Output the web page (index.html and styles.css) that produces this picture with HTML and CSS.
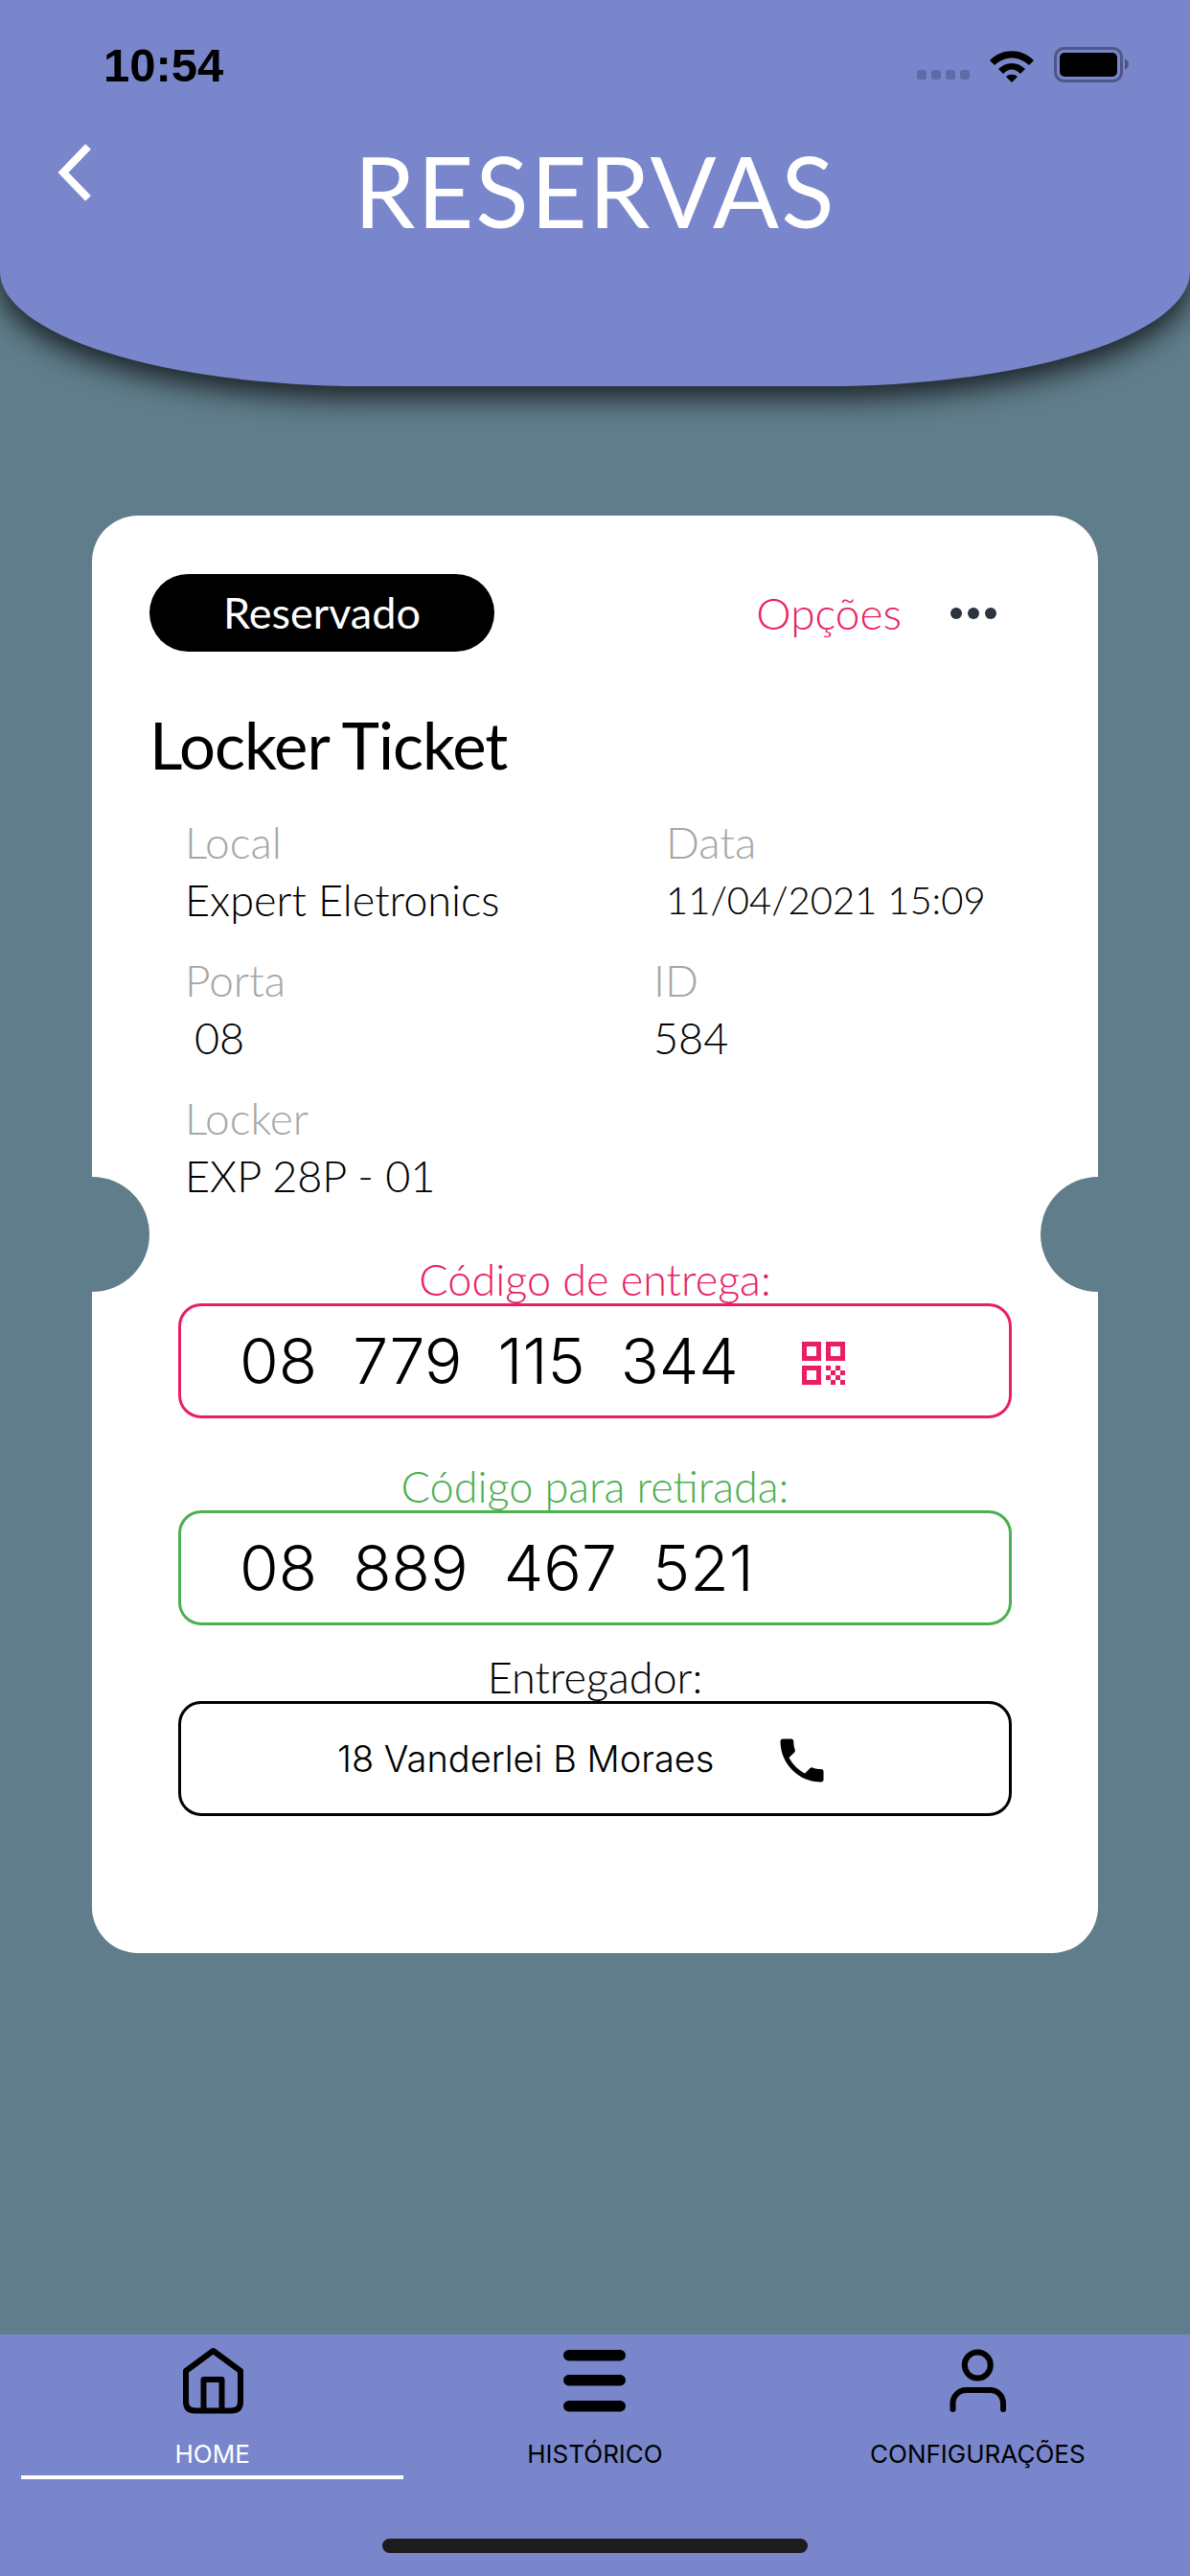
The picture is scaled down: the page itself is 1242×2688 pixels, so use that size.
FILE: index.html
```html
<!DOCTYPE html>
<html lang="pt-BR">
<head>
  <meta charset="UTF-8">
  <meta name="viewport" content="width=device-width, initial-scale=1.0">
  <title>Reservas</title>
  <link rel="stylesheet" href="styles.css">
</head>
<body>
  <div class="screen">
    <header class="header">
      <div class="status-bar">
        <span class="clock">10:54</span>
        <div class="status-icons">
          <div class="signal"><i></i><i></i><i></i><i></i></div>
          <svg class="wifi" width="48" height="36" viewBox="0 0 48 36">
            <path d="M1 13C14 0 34 0 47 13L42 18C31 8 17 8 6 18Z"/>
            <path d="M10 22C18 14 30 14 38 22L33 27C27 21 21 21 15 27Z"/>
            <path d="M18 30C21 27 27 27 30 30L24 36Z"/>
          </svg>
          <svg class="battery" width="80" height="38" viewBox="0 0 80 38">
            <rect x="1.5" y="1.5" width="69" height="34" rx="9" fill="none" stroke="#4f5688" stroke-width="3"/>
            <rect x="6" y="6" width="60" height="25" rx="5"/>
            <path d="M74 12C77 14 78 16 78 18C78 20 77 22 74 24Z" fill="#4f5688"/>
          </svg>
        </div>
      </div>
      <div class="title-row">
        <svg class="back" width="60" height="80" viewBox="0 0 60 80">
          <path d="M42 13L16 40L42 67" fill="none" stroke="#fff" stroke-width="8"/>
        </svg>
        <h1>RESERVAS</h1>
      </div>
    </header>

    <main class="content">
      <div class="card">
        <div class="notch notch-left"></div>
        <div class="notch notch-right"></div>

        <div class="card-top">
          <div class="pill">Reservado</div>
          <div class="options">
            <span class="options-label">Opções</span>
            <svg width="50" height="14" viewBox="0 0 50 14" fill="#2b3440">
              <circle cx="7" cy="7" r="6"/><circle cx="25" cy="7" r="6"/><circle cx="43" cy="7" r="6"/>
            </svg>
          </div>
        </div>

        <h2>Locker Ticket</h2>

        <div class="info-row">
          <div class="info"><div class="info-label">Local</div><div class="info-value">Expert Eletronics</div></div>
          <div class="info"><div class="info-label">Data</div><div class="info-value info-date">11/04/2021 15:09</div></div>
        </div>
        <div class="info-row">
          <div class="info"><div class="info-label">Porta</div><div class="info-value info-porta">08</div></div>
          <div class="info info-id"><div class="info-label">ID</div><div class="info-value">584</div></div>
        </div>
        <div class="info-row">
          <div class="info"><div class="info-label">Locker</div><div class="info-value">EXP 28P - 01</div></div>
        </div>

        <div class="code-group code-pink">
          <div class="code-title">Código de entrega:</div>
          <div class="code-box">
            <span class="code">08&nbsp; 779&nbsp; 115&nbsp; 344</span>
            <svg class="qr" width="46" height="46" viewBox="0 0 46 46" fill="#e91e63">
              <path fill-rule="evenodd" d="M0 0H20V20H0ZM5 5V15H15V5Z"/>
              <path fill-rule="evenodd" d="M25 0H45V20H25ZM30 5V15H40V5Z"/>
              <path fill-rule="evenodd" d="M0 25H20V45H0ZM5 30V40H15V30Z"/>
              <path d="M25 25h5v5h-5zM35 25h5v5h-5zM30 30h5v5h-5zM40 30h5v5h-5zM25 35h5v5h-5zM35 35h5v5h-5zM30 40h5v5h-5zM40 40h5v5h-5z"/>
            </svg>
          </div>
        </div>

        <div class="code-group code-green">
          <div class="code-title">Código para retirada:</div>
          <div class="code-box">
            <span class="code">08&nbsp; 889&nbsp; 467&nbsp; 521</span>
          </div>
        </div>

        <div class="code-group code-black">
          <div class="code-title">Entregador:</div>
          <div class="code-box">
            <span class="driver">18 Vanderlei B Moraes</span>
            <svg class="phone" width="60" height="60" viewBox="0 0 24 24">
              <path d="M6.6 10.8c1.4 2.8 3.8 5.1 6.6 6.6l2.2-2.2c.3-.3.7-.4 1-.2 1.1.4 2.3.6 3.6.6.6 0 1 .4 1 1V20c0 .6-.4 1-1 1C10.6 21 3 13.4 3 4c0-.6.4-1 1-1h3.500c.6 0 1 .4 1 1 0 1.300.2 2.500.6 3.600.1.300 0 .7-.2 1z"/>
            </svg>
          </div>
        </div>
      </div>
    </main>

    <nav class="tabbar">
      <div class="tabs">
        <div class="tab tab-active">
          <svg class="tab-icon" width="100" height="94" viewBox="0 6 100 94" fill="none" stroke="#000" stroke-width="6">
            <path d="M50.500 23L79 44V76Q79 85.500 69.500 85.500H31.500Q22 85.500 22 76V44Z" stroke-linejoin="round"/>
            <path d="M40.500 85V53H59.500V85" stroke-linejoin="round"/>
          </svg>
          <span class="tab-label">HOME</span>
        </div>
        <div class="tab">
          <svg class="tab-icon" width="100" height="94" viewBox="0 6 100 94">
            <rect x="17" y="22" width="65" height="11.500" rx="5.750"/>
            <rect x="17" y="48" width="65" height="11.500" rx="5.750"/>
            <rect x="17" y="75" width="65" height="11.500" rx="5.750"/>
          </svg>
          <span class="tab-label">HISTÓRICO</span>
        </div>
        <div class="tab">
          <svg class="tab-icon" width="100" height="94" viewBox="0 6 100 94" fill="none" stroke="#000" stroke-width="6">
            <circle cx="50.300" cy="38" r="13.500"/>
            <path d="M24.500 84V78C24.500 70 31 64 38 64H63.500C71 64 77 70 77 78V84" stroke-linecap="round"/>
          </svg>
          <span class="tab-label">CONFIGURAÇÕES</span>
        </div>
      </div>
      <div class="home-indicator"></div>
    </nav>
  </div>
</body>
</html>
```

FILE: styles.css
```css
:root {
  --header-color: #7986cb;
  --page-color: #607d8b;
  --pink: #e91e63;
  --green: #4caf50;
  --label-color: #a6a6a6;
}

* {
  box-sizing: border-box;
}

html, body {
  margin: 0;
  padding: 0;
}

body {
  width: 1242px;
  height: 2688px;
  overflow: hidden;
  font-family: 'Lato', 'Open Sans', sans-serif;
  font-weight: 300;
  color: #000;
  background-color: var(--page-color);
}

.screen {
  display: flex;
  flex-direction: column;
  height: 2688px;
}

/* Header */
.header {
  height: 403px;
  flex: none;
  background-color: var(--header-color);
  border-radius: 0 0 380px 380px / 0 0 120px 120px;
  box-shadow: 0 12px 30px rgba(0, 0, 0, 0.75);
  color: #fff;
}

.status-bar {
  display: flex;
  justify-content: space-between;
  align-items: center;
  height: 56px;
  margin-top: 40px;
  padding: 0 62px 0 108px;
}

.clock {
  font-family: 'Liberation Sans', sans-serif;
  font-size: 49px;
  font-weight: 700;
  color: #000;
}

.status-icons {
  display: flex;
  align-items: center;
  gap: 20px;
}

.signal {
  display: flex;
  gap: 5px;
  margin-top: 20px;
}

.signal i {
  width: 10px;
  height: 10px;
  border-radius: 3px;
  background-color: #5f6aa6;
}

.title-row {
  display: flex;
  justify-content: center;
  position: relative;
  padding-top: 53px;
}

.back {
  position: absolute;
  left: 50px;
  top: 44px;
}

h1 {
  margin: 0;
  font-size: 102px;
  font-weight: 400;
  line-height: 100px;
  letter-spacing: 2px;
}

/* Card */
.content {
  flex: 1;
  padding: 135px 96px 0;
}

.card {
  position: relative;
  height: 1500px;
  padding: 61px 60px 0;
  background-color: #fff;
  border-radius: 48px;
}

.notch {
  position: absolute;
  top: 690px;
  width: 120px;
  height: 120px;
  border-radius: 50%;
  background-color: var(--page-color);
}

.notch-left {
  left: -60px;
}

.notch-right {
  right: -60px;
}

.card-top {
  display: flex;
  justify-content: space-between;
  align-items: center;
}

.pill {
  width: 360px;
  height: 81px;
  line-height: 81px;
  text-align: center;
  font-size: 45px;
  font-weight: 400;
  color: #fff;
  background-color: #000;
  border-radius: 41px;
}

.options {
  display: flex;
  align-items: center;
  gap: 50px;
  padding-right: 45px;
}

.options-label {
  font-size: 46px;
  color: var(--pink);
}

h2 {
  margin: 62px 0 39px;
  font-size: 67px;
  font-weight: 400;
  line-height: 70px;
  letter-spacing: -1px;
}

.info-row {
  display: flex;
  padding-left: 37px;
  height: 144px;
}

.info {
  flex: none;
  width: 502px;
}

.info-id {
  margin-left: -13px;
}

.info-label {
  font-size: 46px;
  line-height: 56px;
  color: var(--label-color);
}

.info-value {
  font-size: 45px;
  line-height: 64px;
}

.info-date {
  font-size: 40px;
}

.info-porta {
  padding-left: 10px;
}

.code-group {
  padding: 0 30px;
}

.code-title {
  text-align: center;
  font-size: 45px;
  line-height: 50px;
}

.code-box {
  display: flex;
  align-items: center;
  height: 120px;
  padding-left: 61px;
  border: 3px solid #000;
  border-radius: 24px;
}

.code {
  font-family: 'Inter', sans-serif;
  font-size: 66px;
  font-weight: 300;
}

.code-pink {
  margin-top: 27px;
}

.code-pink .code-title {
  color: var(--pink);
}

.code-pink .code-box {
  border-color: var(--pink);
}

.code-green {
  margin-top: 46px;
}

.code-green .code-title {
  color: var(--green);
}

.code-green .code-box {
  border-color: var(--green);
}

.code-black {
  margin-top: 29px;
}

.code-black .code-box {
  padding-left: 163px;
}

.qr {
  margin-left: 66px;
  margin-top: 6px;
}

.driver {
  font-family: 'Inter', sans-serif;
  font-size: 38px;
  font-weight: 300;
}

.phone {
  margin-left: 62px;
  margin-top: 4px;
}

/* Tab bar */
.tabbar {
  flex: none;
  height: 252px;
  background-color: var(--header-color);
}

.tabs {
  display: grid;
  grid-template-columns: repeat(3, 1fr);
  padding: 0 22px;
}

.tab {
  display: flex;
  flex-direction: column;
  align-items: center;
  height: 151px;
}

.tab-active {
  border-bottom: 4px solid #fff;
}

.tab-active .tab-label {
  color: #fff;
}

.tab-icon {
  flex: none;
}

.tab-label {
  margin-top: 15px;
  font-family: 'Inter', sans-serif;
  font-size: 26px;
  font-weight: 400;
}

.home-indicator {
  width: 444px;
  height: 15px;
  margin: 62px auto 0;
  border-radius: 8px;
  background-color: #1c1c1c;
}
```
